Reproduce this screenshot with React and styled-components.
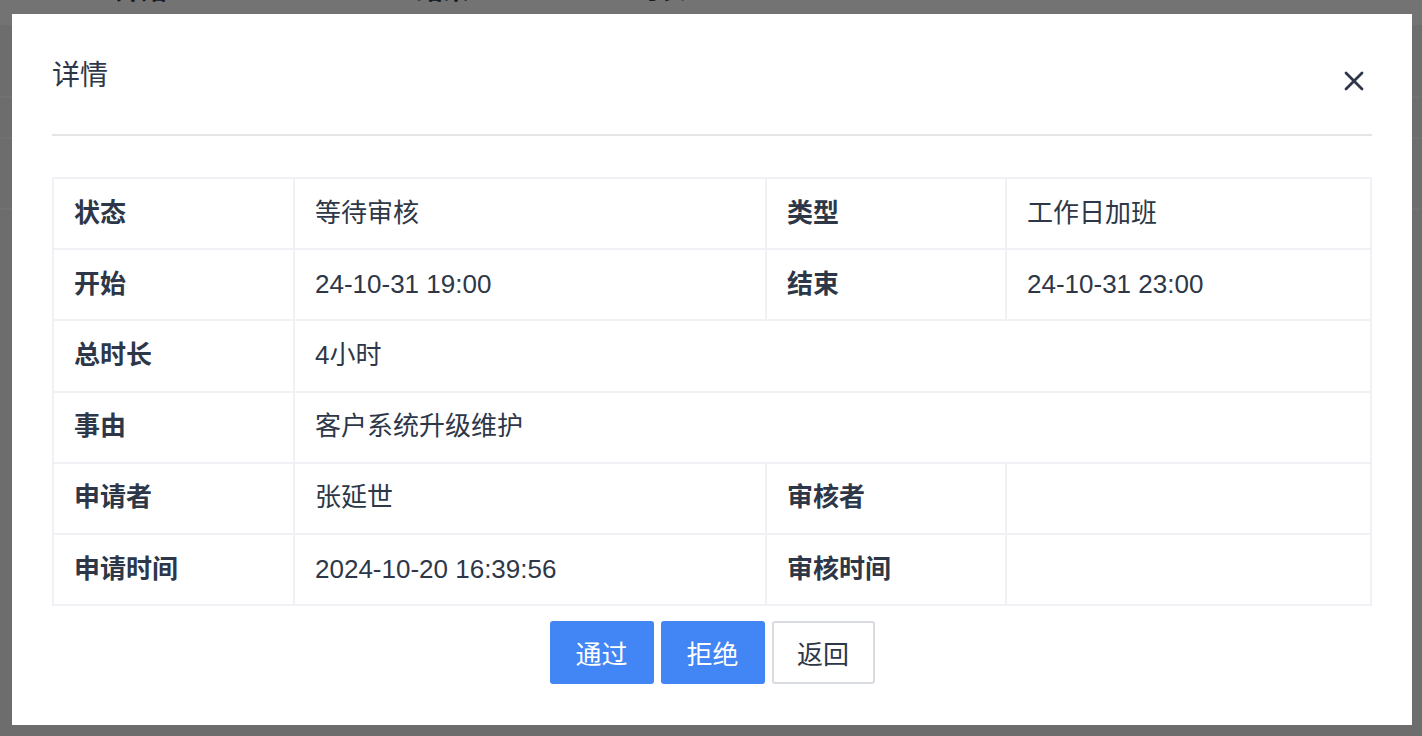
import React from "react";
import styled, { createGlobalStyle } from "styled-components";

const GlobalStyle = createGlobalStyle`
  * {
    box-sizing: border-box;
  }
  html, body {
    margin: 0;
    padding: 0;
  }
  body {
    font-family: "Liberation Sans", "Noto Sans CJK SC", sans-serif;
    color: #2d3748;
    background: #f2f2f2;
  }
`;

const Page = styled.div`
  width: 100vw;
  height: 100vh;
  overflow: hidden;
  background: #f2f2f2;
`;

const BehindHead = styled.div`
  display: flex;
  margin-top: -23px;
  height: 48px;
  padding-left: 115px;
  align-items: flex-start;
  background: #ffffff;
  border-bottom: 2px solid #ffffff;
`;

const BehindCell = styled.div`
  width: ${(p) => p.w}px;
  font-size: 26px;
  line-height: 26px;
  font-weight: bold;
  color: #2d3748;
`;

const BehindRow = styled.div`
  height: ${(p) => p.h}px;
  border-bottom: 2px solid #fbfbfb;
`;

const Overlay = styled.div`
  position: fixed;
  inset: 0;
  background: rgba(0, 0, 0, 0.55);
  display: flex;
  justify-content: center;
  align-items: flex-start;
  padding: 14px 0 0 2px;
`;

const Modal = styled.div`
  width: 1400px;
  background: #ffffff;
  padding: 0 40px 41px;
`;

const Header = styled.div`
  display: flex;
  justify-content: space-between;
  align-items: flex-start;
  padding: 36px 0 35px;
  border-bottom: 2px solid #e5e5e5;
`;

const Title = styled.h3`
  margin: 0;
  padding-top: 2px;
  font-size: 28px;
  line-height: 47px;
  font-weight: 400;
  color: #2d3748;
`;

const CloseButton = styled.button`
  width: 36px;
  height: 36px;
  margin-top: 13px;
  padding: 0;
  border: none;
  background: transparent;
  display: flex;
  align-items: center;
  justify-content: center;
  color: #2d3748;
  cursor: pointer;
`;

const Grid = styled.div`
  margin-top: 41px;
  display: grid;
  grid-template-columns: 239px 470px 238px 363px;
  grid-auto-rows: 69.2px;
  gap: 2px;
  padding: 2px;
  background: #eff1f4;
`;

const Cell = styled.div`
  background: #ffffff;
  display: flex;
  align-items: center;
  padding: 0 20px 2px;
  font-size: 26px;
  line-height: 1;
  font-weight: ${(p) => (p.label ? "bold" : "normal")};
  color: #2d3748;
  grid-column: ${(p) => (p.span ? `span ${p.span}` : "auto")};
  white-space: nowrap;
`;

const Actions = styled.div`
  display: flex;
  justify-content: center;
  gap: 7px;
  margin-top: 15px;
`;

const Button = styled.button`
  width: ${(p) => (p.outline ? 103 : 104)}px;
  height: 63px;
  border-radius: 3px;
  font-family: inherit;
  font-size: 26px;
  cursor: pointer;
  background: ${(p) => (p.outline ? "#ffffff" : "#4285f4")};
  color: ${(p) => (p.outline ? "#2d3748" : "#ffffff")};
  border: ${(p) => (p.outline ? "2px solid #d8dbe0" : "none")};
  padding: 0;
`;

const CloseIcon = () => (
  <svg width="20" height="20" viewBox="0 0 20 20" fill="none">
    <path
      d="M2 2L18 18M18 2L2 18"
      stroke="currentColor"
      strokeWidth="2.8"
      strokeLinecap="round"
    />
  </svg>
);

const rows = [
  [
    ["状态", "等待审核"],
    ["类型", "工作日加班"],
  ],
  [
    ["开始", "24-10-31 19:00"],
    ["结束", "24-10-31 23:00"],
  ],
  [["总时长", "4小时"]],
  [["事由", "客户系统升级维护"]],
  [
    ["申请者", "张延世"],
    ["审核者", ""],
  ],
  [
    ["申请时间", "2024-10-20 16:39:56"],
    ["审核时间", ""],
  ],
];

const App = () => {
  return (
    <>
      <GlobalStyle />
      <Page>
        <BehindHead>
          <BehindCell w={302}>开始</BehindCell>
          <BehindCell w={217}>结束</BehindCell>
          <BehindCell w={200}>时长</BehindCell>
        </BehindHead>
        <BehindRow h={73} />
        <BehindRow h={41} />
        <BehindRow h={71} />
      </Page>
      <Overlay>
        <Modal>
          <Header>
            <Title>详情</Title>
            <CloseButton aria-label="关闭">
              <CloseIcon />
            </CloseButton>
          </Header>
          <Grid>
            {rows.map((row) =>
              row.map(([label, value]) => (
                <React.Fragment key={label}>
                  <Cell label>{label}</Cell>
                  <Cell span={row.length === 1 ? 3 : undefined}>{value}</Cell>
                </React.Fragment>
              ))
            )}
          </Grid>
          <Actions>
            <Button>通过</Button>
            <Button>拒绝</Button>
            <Button outline>返回</Button>
          </Actions>
        </Modal>
      </Overlay>
    </>
  );
};

export default App;
